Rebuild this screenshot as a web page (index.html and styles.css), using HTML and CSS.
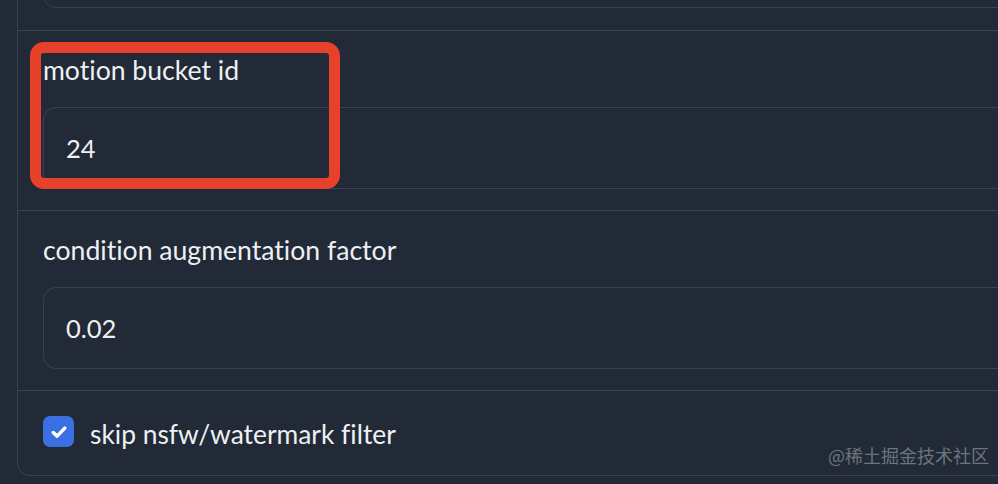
FILE: index.html
```html
<!DOCTYPE html>
<html lang="en">
<head>
<meta charset="utf-8">
<title>Settings</title>
<link rel="stylesheet" href="styles.css">
</head>
<body>
<div class="page">
  <div class="panel">
    <div class="field field-first">
      <div class="input"></div>
    </div>
    <div class="field">
      <div class="label">motion bucket id</div>
      <div class="input"><span class="value">24</span></div>
    </div>
    <div class="field">
      <div class="label">condition augmentation factor</div>
      <div class="input"><span class="value">0.02</span></div>
    </div>
    <div class="field field-check">
      <span class="checkbox">
        <svg viewBox="0 0 16 16" width="20" height="20" aria-hidden="true"><path d="M3.4 8.4 L6.5 11.3 L12.6 4.9" fill="none" stroke="#fff" stroke-width="2.8" stroke-linecap="round" stroke-linejoin="round"/></svg>
      </span>
      <span class="check-label">skip nsfw/watermark filter</span>
    </div>
  </div>
  <div class="highlight"></div>
  <div class="watermark">@稀土掘金技术社区</div>
</div>
</body>
</html>
```
FILE: styles.css
```css
html, body {
  margin: 0;
  padding: 0;
  background: #212a36;
  overflow: hidden;
}
.page {
  position: relative;
  width: 998px;
  height: 484px;
  overflow: hidden;
  font-family: Lato, "Noto Sans", sans-serif;
  font-variant-ligatures: none;
  color: #eef0f3;
}
.panel {
  margin: -74px 0 0 17px;
  width: 1100px;
  border: 1px solid #3a4250;
  border-top: none;
  border-right: none;
  border-radius: 0 0 0 13px;
}
.field {
  padding: 22px 0 21px 25px;
  border-top: 1px solid #3a4250;
}
.field-first {
  padding-top: 0;
  padding-bottom: 22px;
  border-top: none;
}
.label {
  height: 33px;
  line-height: 35px;
  font-size: 26.6px;
  margin-bottom: 21px;
}
.input {
  box-sizing: border-box;
  height: 82px;
  border: 1px solid #3a4250;
  border-radius: 13px;
  display: flex;
  align-items: center;
  padding-left: 22px;
}
.value {
  font-size: 25.5px;
}
.field-check {
  display: flex;
  align-items: center;
  gap: 16px;
  padding-top: 25px;
  padding-bottom: 28px;
}
.checkbox {
  width: 31px;
  height: 31px;
  border-radius: 7px;
  background: #3b6fe4;
  display: flex;
  align-items: center;
  justify-content: center;
}
.check-label {
  font-size: 26.4px;
  line-height: 31px;
  margin-top: 3px;
  margin-bottom: -3px;
}
.highlight {
  position: absolute;
  left: 30px;
  top: 42px;
  width: 310px;
  height: 147px;
  box-sizing: border-box;
  border: 11px solid #e8412b;
  border-radius: 14px;
}
.watermark {
  position: absolute;
  right: 9px;
  top: 443px;
  font-family: "Noto Sans CJK SC", sans-serif;
  font-size: 18px;
  line-height: 24px;
  color: rgba(160, 168, 180, 0.6);
}
```
